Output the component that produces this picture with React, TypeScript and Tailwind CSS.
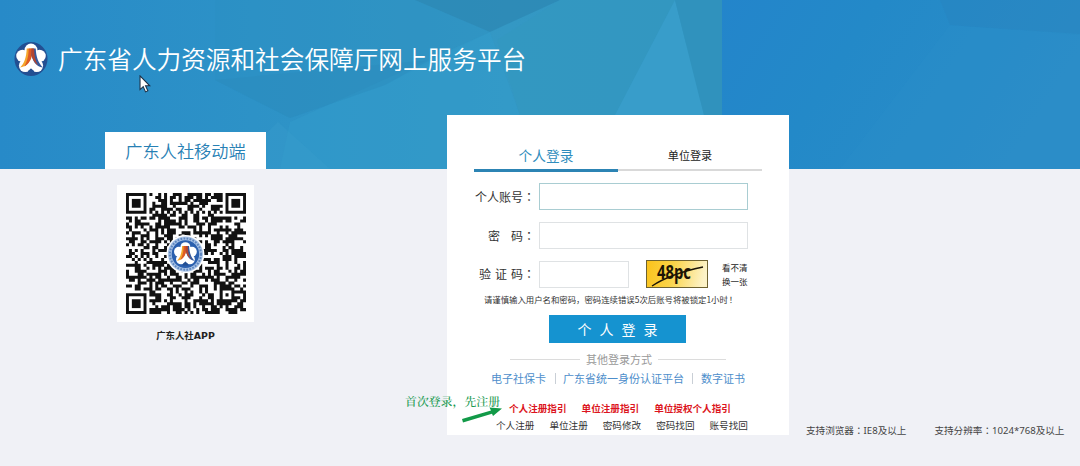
import type { ReactNode } from 'react';

const QR_SIZE = 41;

const FINDERS = [
  { x: 0, y: 0 },
  { x: QR_SIZE - 7, y: 0 },
  { x: 0, y: QR_SIZE - 7 },
];

function buildModules(): string {
  let seed = 90731;
  let d = '';
  for (let y = 0; y < QR_SIZE; y++) {
    for (let x = 0; x < QR_SIZE; x++) {
      seed = (seed * 1103515245 + 12345) % 2147483648;
      const inFinder = FINDERS.some((f) => x >= f.x - 1 && x <= f.x + 7 && y >= f.y - 1 && y <= f.y + 7);
      const inAlign = x >= 32 && x <= 36 && y >= 32 && y <= 36;
      if (inFinder) continue;
      let on = seed / 2147483648 < 0.54;
      if (x === 6) on = y % 2 === 0;
      if (y === 6) on = x % 2 === 0;
      if (inAlign) {
        const ring = Math.max(Math.abs(x - 34), Math.abs(y - 34));
        on = ring !== 1;
      }
      if (on) d += `M${x} ${y}h1.03v1.03h-1.03z`;
    }
  }
  return d;
}

const QR_PATH = buildModules();

function Emblem() {
  return (
    <>
      <g fill="#fff">
        <circle cx="18" cy="9" r="6.8" />
        <circle cx="9" cy="15.2" r="6.6" />
        <circle cx="27" cy="15.2" r="6.6" />
        <circle cx="12" cy="25.500" r="6.8" />
        <circle cx="24" cy="25.500" r="6.8" />
        <circle cx="18" cy="18" r="9" />
      </g>
      <path d="M13.500 7.500h5.500v5C18 19 15 26.500 6.500 27.500 11 23 13 17 13.500 7.500z" fill="#f5a62b" />
      <path d="M15.500 7.500h4v5.500c-1 6-3.800 11-8.500 13.500 3-5.500 4.500-11 4.500-19z" fill="#dd5a26" />
      <path d="M19.200 7.500h3.800c.4 8.500 2.500 15 7.500 20-7.500-1-11-7.500-12-13.500z" fill="#35599c" />
      <path d="M18.500 7.500h2.800c0 7 1 12.500 4 17.500-4.500-3.500-7-8.500-7-14.500z" fill="#b5452f" />
      <path d="M15 31l3-2.500 3 2.500 1 3h-8z" fill="#234f92" />
    </>
  );
}

function Logo() {
  return (
    <svg width="34" height="36" viewBox="0 0 36 37" className="shrink-0">
      <ellipse cx="18" cy="18.5" rx="17.500" ry="18" fill="#234f92" />
      <Emblem />
    </svg>
  );
}

function QrCode() {
  return (
    <svg width="120" height="121" viewBox="0 0 41 41" preserveAspectRatio="none">
      <path d={QR_PATH} fill="#111" />
      {FINDERS.map((f) => (
        <g key={`${f.x}-${f.y}`} fill="#111">
          <path d={`M${f.x} ${f.y}h7v7h-7zM${f.x + 1} ${f.y + 1}v5h5v-5z`} fillRule="evenodd" />
          <rect x={f.x + 2} y={f.y + 2} width="3" height="3" />
        </g>
      ))}
      <circle cx="20.3" cy="20.700" r="6.500" fill="#fff" />
      <circle cx="20.3" cy="20.700" r="6" fill="#a9c3e6" />
      <circle cx="20.3" cy="20.700" r="5.300" fill="none" stroke="#5e86bf" strokeWidth=".7" strokeDasharray=".6 .45" />
      <circle cx="20.3" cy="20.700" r="4.700" fill="#2a5fae" />
      <g transform="translate(15.800 16.100) scale(.25)">
        <Emblem />
      </g>
    </svg>
  );
}

function HeaderArt() {
  return (
    <svg
      viewBox="0 0 1080 169"
      preserveAspectRatio="none"
      className="col-start-1 row-start-1 h-[169px] w-full"
    >
      <defs>
        <linearGradient id="sky" x1="0" x2="1" y1="0" y2="0">
          <stop offset="0" stopColor="#278ac8" />
          <stop offset=".35" stopColor="#2d92c7" />
          <stop offset=".7" stopColor="#3498c4" />
          <stop offset="1" stopColor="#3296c0" />
        </linearGradient>
        <linearGradient id="side" x1="0" x2="1" y1="0" y2=".3">
          <stop offset="0" stopColor="#2385cb" />
          <stop offset=".4" stopColor="#2389c8" />
          <stop offset="1" stopColor="#2b8dc7" />
        </linearGradient>
      </defs>
      <rect width="723" height="169" fill="url(#sky)" />
      <path d="M215 0H415L490 32 385 85 290 118 215 80z" fill="#2c8fc0" opacity=".3" />
      <path d="M415 0H560L490 32z" fill="#2c87b3" opacity=".75" />
      <path d="M490 32L290 122 280 169H447V115H520z" fill="#329ccb" opacity=".5" />
      <path d="M278 122L330 169H230z" fill="#3a9fce" opacity=".3" />
      <path d="M215 80L430 60 385 85 290 118z" fill="#2b8abb" opacity=".35" />
      <path d="M560 0H675L615 115H520L497 40z" fill="#3398bf" opacity=".6" />
      <path d="M675 0L615 115H704z" fill="#389dca" />
      <path d="M675 0H723V115H704z" fill="#3092bd" />
      <rect x="722" width="358" height="169" fill="url(#side)" />
      <path d="M950 25L1080 35V169H840z" fill="#2c8fc9" opacity=".3" />
      <path d="M940 0H1080V34L950 25z" fill="#2783bd" opacity=".4" />
    </svg>
  );
}

function Cursor() {
  return (
    <svg width="12" height="19" viewBox="0 0 11 18" className="absolute left-[139px] top-[75px]">
      <path
        d="M.8.8v13l3-2.800 2.200 5 2.200-1-2.200-4.800h4z"
        fill="#fff"
        stroke="#1d2f45"
        strokeWidth="1"
      />
    </svg>
  );
}

// Traditional face centres the full-width punctuation in its cell
function Wide({ children }: { children: string }) {
  return <span className="font-['Noto_Sans_CJK_TC',sans-serif]">{children}</span>;
}

function FormRow({ label, className, children }: { label: ReactNode; className: string; children: ReactNode }) {
  return (
    <div className={`flex items-center ${className}`}>
      <div className="w-[61px] shrink-0 whitespace-pre text-right text-[12px] leading-[18px] text-[#333]">
        {label}
        <Wide>：</Wide>
      </div>
      {children}
    </div>
  );
}

function Captcha() {
  return (
    <svg width="62" height="28" viewBox="0 0 62 28" className="ml-[17px] shrink-0 overflow-visible">
      <defs>
        <linearGradient id="captcha" x1="0" x2="1" y1="0" y2=".1">
          <stop offset="0" stopColor="#fbc21a" />
          <stop offset=".45" stopColor="#fad347" />
          <stop offset="1" stopColor="#fdf3c8" />
        </linearGradient>
      </defs>
      <rect x=".5" y=".5" width="61" height="27" fill="url(#captcha)" stroke="#6e6230" />
      <text
        x="11"
        y="19"
        fontSize="19"
        fontWeight="700"
        textLength="34"
        lengthAdjust="spacingAndGlyphs"
        fill="#1b1405"
        className="font-['Open_Sans',sans-serif]"
      >
        48pc
      </text>
      <path d="M6 26C18 18 38 11 57 7" fill="none" stroke="#1b1405" strokeWidth="1.3" />
    </svg>
  );
}

const guides = ['个人注册指引', '单位注册指引', '单位授权个人指引'];
const accountLinks = ['个人注册', '单位注册', '密码修改', '密码找回', '账号找回'];

function LoginCard() {
  return (
    <div className="relative ml-[181px] h-[320px] w-[342px] bg-white">
      {/* Tabs */}
      <div className="ml-[27px] flex h-[57px] w-[288px] pt-[30px]">
        <div className="h-[27px] w-[144px] border-b-[3px] border-[#2c84b4] text-center text-[13.7px] leading-5 text-[#2f8dbd]">
          个人登录
        </div>
        <div className="h-[26px] w-[144px] border-b-2 border-[#d9d9d9] text-center text-[11.1px] leading-5 text-[#222]">
          单位登录
        </div>
      </div>

      {/* Form */}
      <FormRow label="个人账号" className="ml-[27px] mt-[11px] h-[27px]">
        <div className="ml-1 h-[27px] w-[209px] border border-[#a9cdd2] bg-white" />
      </FormRow>
      <FormRow label={<span className="[word-spacing:1px]">密   码</span>} className="ml-[27px] mt-3 h-[27px]">
        <div className="ml-1 h-[27px] w-[209px] border border-[#dfe2e4] bg-white" />
      </FormRow>
      <FormRow label={<span className="[word-spacing:1.3px]">验 证 码</span>} className="ml-[27px] mt-[11px] h-7">
        <div className="ml-1 h-[27px] w-[90px] border border-[#dfe2e4] bg-white" />
        <Captcha />
        <div className="ml-[14px] whitespace-nowrap text-[8.5px] leading-[14px] text-[#222]">
          <p>看不清</p>
          <p>换一张</p>
        </div>
      </FormRow>
      <p className="ml-[37px] mt-1 h-[14px] whitespace-nowrap text-[8.4px] leading-[14px] text-[#333]">
        请谨慎输入用户名和密码，密码连续错误5次后账号将被锁定1小时
        <span className="-ml-px">
          <Wide>！</Wide>
        </span>
      </p>
      <div className="ml-[102px] mt-[9px] h-7 w-[137px] whitespace-pre bg-[#1593d0] text-center text-[14px] leading-7 text-white">
        个<span className="ml-2">人</span>
        <span className="ml-2">登</span>
        <span className="ml-2">录</span>
      </div>

      {/* Other sign-in methods */}
      <div className="ml-[63px] mt-[7px] flex h-[18px] w-[216px] items-center justify-between text-[11px] leading-[18px] text-[#999]">
        <div className="h-px w-[70px] bg-[#dcdcdc]" />
        其他登录方式
        <div className="h-px w-[68px] bg-[#dcdcdc]" />
      </div>
      <div className="ml-[44px] mt-px flex h-[18px] items-center whitespace-nowrap text-[11px] leading-[18px] text-[#4d8ecb]">
        电子社保卡
        <div className="ml-[9px] mr-[7px] h-[11px] w-px bg-[#c9cfd6]" />
        广东省统一身份认证平台
        <div className="mx-2 h-[11px] w-px bg-[#c9cfd6]" />
        数字证书
      </div>

      {/* Registration links */}
      <div className="ml-[62px] mt-[13px] flex h-4 gap-[15px] whitespace-nowrap text-[9.6px] font-bold leading-4 text-[#dc1420]">
        {guides.map((text) => (
          <span key={text}>{text}</span>
        ))}
      </div>
      <div className="ml-[49px] mt-px flex h-4 gap-[15px] whitespace-nowrap text-[9.6px] leading-4 text-[#333]">
        {accountLinks.map((text) => (
          <span key={text}>{text}</span>
        ))}
      </div>

      {/* First-time hint */}
      <span className="absolute -left-[42px] top-[277px] whitespace-nowrap font-['Noto_Serif_CJK_SC','Noto_Sans_CJK_SC',serif] text-[11.9px] font-medium leading-[18px] text-[#17994f]">
        首次登录，先注册
      </span>
      <svg width="42" height="17" viewBox="0 0 42 17" className="absolute left-[14px] top-[291px]">
        <path d="M1 13L30 4.500 28.500 1.500 41 2.500 32 10 31 7.800 2 16.500z" fill="#129a48" />
      </svg>
    </div>
  );
}

export default function App() {
  return (
    <div className="relative grid h-[466px] w-[1080px] grid-cols-1 grid-rows-1 items-start overflow-hidden bg-[#f0f1f6] font-['Noto_Sans_CJK_SC',sans-serif]">
      <HeaderArt />
      <div className="col-start-1 row-start-1 flex flex-col">
        <div className="flex h-[115px] items-start pl-[14px] pt-[41px]">
          <Logo />
          <h1 className="-mt-[2px] ml-[10px] whitespace-nowrap text-[24.65px] font-[350] leading-[38px] text-white">
            广东省人力资源和社会保障厅网上服务平台
          </h1>
        </div>
        <div className="flex items-start">
          {/* Mobile app */}
          <div className="ml-[105px] mt-[17px] w-[161px]">
            <h2 className="h-[37px] bg-white text-center text-[17.2px] font-[350] leading-[38px] text-[#2780b4]">
              广东人社移动端
            </h2>
            <div className="ml-[12px] mt-[16px] flex h-[137px] w-[137px] items-center justify-center bg-white">
              <QrCode />
            </div>
            <p className="mt-[6px] text-center text-[9.4px] font-bold leading-[14px] text-[#222]">
              广东人社<span className="font-['DejaVu_Sans',sans-serif]">APP</span>
            </p>
          </div>
          <LoginCard />
          <div className="ml-[17px] mt-[307px] flex gap-7 whitespace-nowrap font-['Noto_Sans','Noto_Sans_CJK_SC',sans-serif] text-[9.6px] leading-4 text-[#444]">
            <span>
              支持浏览器
              <Wide>：</Wide>
              IE8及以上
            </span>
            <span>
              支持分辨率
              <Wide>：</Wide>
              1024*768及以上
            </span>
          </div>
        </div>
      </div>
      <Cursor />
    </div>
  );
}
